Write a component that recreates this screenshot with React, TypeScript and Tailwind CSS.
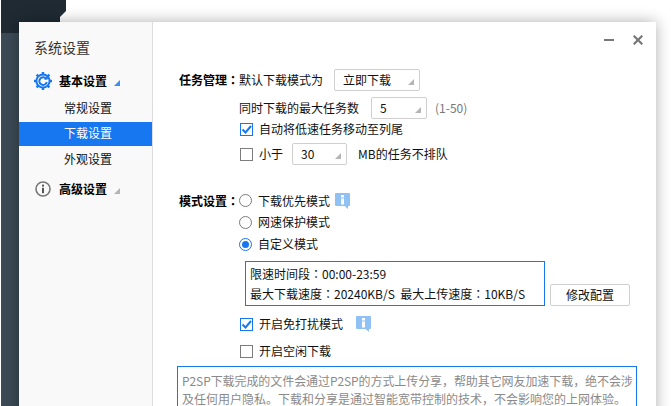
import React from 'react';

const font = { fontFamily: '"Noto Sans CJK SC", "Noto Sans", sans-serif' };

function Corner({ className }: { className: string }) {
  return (
    <svg width="6" height="6" viewBox="0 0 6 6" className={className}>
      <path d="M6 0V6H0Z" fill="currentColor" />
    </svg>
  );
}

// full-width colon sits in the middle of its cell in the reference
function Colon() {
  return <span className="font-['Noto_Sans_CJK_TC']">：</span>;
}

function Select({ value, width }: { value: string; width: string }) {
  return (
    <div className={`${width} relative flex h-[22px] shrink-0 items-center rounded-[2px] border border-[#cfcfcf] bg-white pl-[8px]`}>
      {value}
      <Corner className="absolute right-[5px] bottom-[5px] text-[#b5b5b5]" />
    </div>
  );
}

function Check({ checked }: { checked?: boolean }) {
  return (
    <div className={`h-[13px] w-[13px] shrink-0 border bg-white ${checked ? 'border-[#1677f0]' : 'border-[#7c7c7c]'}`}>
      {checked && (
        <svg width="11" height="11" viewBox="0 0 11 11">
          <path d="M1.5 5.5L4.5 8.5L10 2" fill="none" stroke="#1677f0" strokeWidth="2" />
        </svg>
      )}
    </div>
  );
}

function Radio({ checked }: { checked?: boolean }) {
  return (
    <div className={`flex h-[13px] w-[13px] shrink-0 items-center justify-center rounded-full border bg-white ${checked ? 'border-[#1677f0]' : 'border-[#7c7c7c]'}`}>
      {checked && <div className="h-[7px] w-[7px] rounded-full bg-[#1677f0]" />}
    </div>
  );
}

function InfoBubble() {
  return (
    <svg width="15" height="16" viewBox="0 0 15 16" className="block shrink-0">
      <path d="M1 0H14a1 1 0 0 1 1 1V12a1 1 0 0 1-1 1H13V16L9.5 13H1a1 1 0 0 1-1-1V1a1 1 0 0 1 1-1Z" fill="#8fc1f4" />
      <rect x="6" y="2" width="3" height="2.5" fill="#fff" />
      <rect x="6" y="5.5" width="3" height="6" fill="#fff" />
    </svg>
  );
}

function GearIcon() {
  return (
    <svg width="18" height="18" viewBox="0 0 18 18">
      <g stroke="#1677f0" strokeWidth="2.4">
        <path d="M9 0V3M9 15V18M0 9H3M15 9H18M2.6 2.6L4.8 4.8M13.2 13.2L15.4 15.4M2.6 15.4L4.8 13.2M13.2 4.8L15.4 2.6" />
      </g>
      <circle cx="9" cy="9" r="6.6" fill="#fff" stroke="#1677f0" strokeWidth="2" />
      <path d="M12.4 7.2A3.8 3.8 0 1 0 12.8 10" fill="none" stroke="#1677f0" strokeWidth="2" />
      <path d="M9.8 7.6H13.8V3.6Z" fill="#1677f0" />
    </svg>
  );
}

function InfoCircle() {
  return (
    <svg width="16" height="16" viewBox="0 0 16 16">
      <circle cx="8" cy="8" r="7" fill="none" stroke="#777" strokeWidth="1.6" />
      <rect x="7" y="3.6" width="2" height="2" fill="#555" />
      <rect x="7" y="6.8" width="2" height="5.4" fill="#555" />
    </svg>
  );
}

export default function App() {
  return (
    <div style={font} className="relative h-[406px] w-[671px] overflow-hidden bg-white text-[12px] leading-none whitespace-nowrap text-[#111]">
      {/* app behind the dialog */}
      <div className="ml-[1px] flex h-full w-[65px] flex-col">
        <div className="h-[33px] bg-[#1f2a33]" />
        <div className="flex-1 bg-[#3b4a55]" />
      </div>
      <svg width="6" height="12" viewBox="0 0 6 12" className="absolute top-[11px] left-[60px]">
        <path d="M6 0V12H0V6Z" fill="#fff" />
      </svg>

      <div className="absolute top-[22px] left-[19px] flex h-[420px] w-[637px] bg-white shadow-[0_0_14px_rgba(0,0,0,0.32)]">
        {/* sidebar */}
        <div className="w-[134px] shrink-0 border-r border-r-[#dcdcdc] bg-[#f9f9f9]">
          <div className="flex h-[52px] items-center pb-[2px] pl-[15px] text-[14px] text-[#333]">系统设置</div>
          <div className="flex h-[14px] items-center pl-[15px] font-bold text-black">
            <GearIcon />
            <span className="ml-[7px]">基本设置</span>
            <Corner className="mt-[4px] ml-[7px] text-[#3d8ef0]" />
          </div>
          <div className="mt-[9px] flex h-[25px] items-center pb-[3px] pl-[45px]">常规设置</div>
          <div className="flex h-[24px] items-center bg-[#1677f0] pb-[2px] pl-[45px] text-white">下载设置</div>
          <div className="flex h-[26px] items-center pl-[45px]">外观设置</div>
          <div className="mt-[7px] flex h-[20px] items-center pl-[16px] font-bold text-black">
            <InfoCircle />
            <span className="ml-[8px]">高级设置</span>
            <Corner className="mt-[4px] ml-[7px] text-[#b5b5b5]" />
          </div>
        </div>

        {/* content */}
        <div className="flex-1">
          <div className="flex h-[47px] justify-end gap-[19px] pt-[13px] pr-[13px]">
            <svg width="10" height="10" viewBox="0 0 10 10">
              <rect x="0" y="4" width="10" height="2" fill="#777" />
            </svg>
            <svg width="10" height="10" viewBox="0 0 10 10">
              <path d="M0.7 0.7L9.3 9.3M9.3 0.7L0.7 9.3" stroke="#777" strokeWidth="2.2" />
            </svg>
          </div>

          <div className="pl-[26px]">
            <div className="flex h-[22px] items-center">
              <span className="w-[60px] font-bold text-black">任务管理<Colon /></span>
              <span className="w-[95px]">默认下载模式为</span>
              <Select value="立即下载" width="w-[86px]" />
            </div>
            <div className="mt-[6px] flex h-[22px] items-center pl-[60px]">
              <span className="w-[132px]">同时下载的最大任务数</span>
              <Select value="5" width="w-[56px]" />
              <span className="ml-[8px] text-[#777]">(1-50)</span>
            </div>
            <div className="flex h-[20px] items-center pl-[61px]">
              <Check checked />
              <span className="ml-[6px]">自动将低速任务移动至列尾</span>
            </div>
            <div className="mt-[4px] flex h-[22px] items-center pl-[61px]">
              <Check />
              <span className="ml-[6px] w-[33px]">小于</span>
              <Select value="30" width="w-[55px]" />
              <span className="ml-[11px]">MB的任务不排队</span>
            </div>

            <div className="mt-[25px] flex h-[21px] items-center">
              <span className="w-[60px] font-bold text-black">模式设置<Colon /></span>
              <Radio />
              <span className="ml-[6px]">下载优先模式</span>
              <span className="ml-[5px]"><InfoBubble /></span>
            </div>
            <div className="flex h-[22px] items-center pl-[60px]">
              <Radio />
              <span className="ml-[6px]">网速保护模式</span>
            </div>
            <div className="flex h-[22px] items-center pl-[60px]">
              <Radio checked />
              <span className="ml-[6px]">自定义模式</span>
            </div>

            <div className="mt-[6px] flex items-end pl-[66px]">
              <div className="flex h-[45px] w-[300px] flex-col justify-center gap-[8px] border border-[#1677f0] pt-[1px] pl-[4px]">
                <span>限速时间段<Colon />00:00-23:59</span>
                <span>最大下载速度<Colon />20240KB/S&nbsp; 最大上传速度<Colon />10KB/S</span>
              </div>
              <div className="ml-[5px] flex h-[22px] w-[80px] items-center justify-center rounded-[2px] border border-[#cfcfcf] bg-white">修改配置</div>
            </div>

            <div className="mt-[7px] flex h-[22px] items-center pl-[61px]">
              <Check checked />
              <span className="ml-[6px]">开启免打扰模式</span>
              <span className="ml-[13px]"><InfoBubble /></span>
            </div>
            <div className="mt-[5px] flex h-[22px] items-center pl-[61px]">
              <Check />
              <span className="ml-[6px]">开启空闲下载</span>
            </div>
          </div>

          <div className="mt-[4px] ml-[24px] flex h-[60px] w-[460px] flex-col gap-[6px] border border-[#1677f0] pt-[8px] pl-[4px] text-[#8a8a8a]">
            <span className="tracking-[-0.08px]">P2SP下载完成的文件会通过P2SP的方式上传分享，帮助其它网友加速下载，绝不会涉</span>
            <span>及任何用户隐私。下载和分享是通过智能宽带控制的技术，不会影响您的上网体验。</span>
          </div>
        </div>
      </div>
    </div>
  );
}
